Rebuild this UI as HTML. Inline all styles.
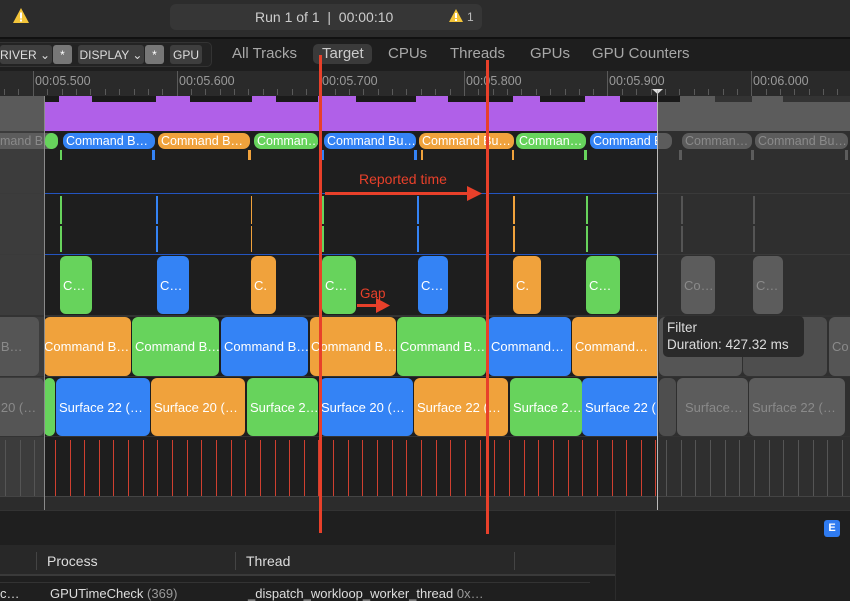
<!DOCTYPE html>
<html><head><meta charset="utf-8"><style>
*{margin:0;padding:0;box-sizing:border-box}
body{width:850px;height:600px;overflow:hidden;background:#1e1e1e;font-family:"Liberation Sans",sans-serif;position:relative;color:#ddd}
.a{position:absolute}
.p{position:absolute;border-radius:6px;color:#fff;font-size:13px;white-space:nowrap;overflow:hidden;display:flex;align-items:center;padding-left:3px}
.s{border-radius:7px;height:16px;font-size:12.5px;padding-left:3px}
.g{background:#67d35c}.b{background:#3483f5}.o{background:#f0a23c}.x{background:#5c5c5c;color:#8a8a8a}
.tk{position:absolute;width:2px}
.btn{position:absolute;top:45px;height:19px;background:#3e3e3e;color:#ddd;font-size:12px;display:flex;align-items:center;justify-content:center;border-radius:3px}
.tab{position:absolute;top:45px;font-size:15px;color:#a8a8a8}
.rl{position:absolute;top:74px;font-size:12.5px;color:#9a9a9a}
</style></head><body>
<div class="a" style="left:0;top:0;width:850px;height:37px;background:#2c2c2c"></div>
<div class="a" style="left:0;top:37px;width:850px;height:2px;background:#111"></div>
<svg class="a" style="left:12px;top:7px" width="18" height="17"><path d="M9 1L17 16H1Z" fill="#f3c53a"/><rect x="8" y="5.5" width="2" height="6" fill="#fff"/><rect x="8" y="12.5" width="2" height="2" fill="#fff"/></svg>
<div class="a" style="left:170px;top:4px;width:312px;height:26px;background:#363636;border-radius:6px"></div>
<div class="a" style="left:255px;top:9px;font-size:14px;color:#ccc">Run 1 of 1 &nbsp;|&nbsp; 00:00:10</div>
<svg class="a" style="left:448px;top:8px" width="16" height="15"><path d="M8 1L15 14H1Z" fill="#f3c53a"/><rect x="7" y="5" width="2" height="5" fill="#fff"/><rect x="7" y="11" width="2" height="2" fill="#fff"/></svg>
<div class="a" style="left:467px;top:10px;font-size:12px;color:#bbb">1</div>
<div class="a" style="left:0;top:39px;width:850px;height:32px;background:#1e1e1e"></div>
<div class="a" style="left:-5px;top:42px;width:217px;height:25px;border:1px solid #333;border-radius:5px;background:#232323"></div>
<div class="btn" style="left:0;width:52px;justify-content:flex-start">RIVER ⌄</div>
<div class="btn" style="left:53px;width:19px;background:#777;color:#fff">*</div>
<div class="btn" style="left:78px;width:66px">DISPLAY ⌄</div>
<div class="btn" style="left:145px;width:19px;background:#777;color:#fff">*</div>
<div class="btn" style="left:170px;width:32px">GPU</div>
<div class="tab" style="left:232px">All Tracks</div>
<div class="a" style="left:313px;top:44px;width:59px;height:20px;background:#3a3a3a;border-radius:5px"></div>
<div class="tab" style="left:322px;color:#ccc">Target</div>
<div class="tab" style="left:388px">CPUs</div>
<div class="tab" style="left:450px">Threads</div>
<div class="tab" style="left:530px">GPUs</div>
<div class="tab" style="left:592px">GPU Counters</div>
<div class="a" style="left:0;top:71px;width:850px;height:25px;background:#2a2a2a"></div>
<svg class="a" style="left:0;top:71px" width="850" height="25" shape-rendering="crispEdges"><path stroke="#5a5a5a" stroke-width="1" d="M4.5 18v6M18.5 18v6M47.5 18v6M62.5 18v6M76.5 18v6M90.5 18v6M105.5 18v6M119.5 18v6M134.5 18v6M148.5 18v6M162.5 18v6M191.5 18v6M205.5 18v6M220.5 18v6M234.5 18v6M248.5 18v6M263.5 18v6M277.5 18v6M292.5 18v6M306.5 18v6M335.5 18v6M349.5 18v6M363.5 18v6M378.5 18v6M392.5 18v6M406.5 18v6M421.5 18v6M435.5 18v6M450.5 18v6M478.5 18v6M493.5 18v6M507.5 18v6M521.5 18v6M536.5 18v6M550.5 18v6M565.5 18v6M579.5 18v6M593.5 18v6M622.5 18v6M636.5 18v6M651.5 18v6M665.5 18v6M679.5 18v6M694.5 18v6M708.5 18v6M723.5 18v6M737.5 18v6M766.5 18v6M780.5 18v6M794.5 18v6M809.5 18v6M823.5 18v6M837.5 18v6M33.5 0v25M177.5 0v25M320.5 0v25M464.5 0v25M607.5 0v25M751.5 0v25"/></svg>
<div class="rl" style="left:35px">00:05.500</div>
<div class="rl" style="left:179px">00:05.600</div>
<div class="rl" style="left:322px">00:05.700</div>
<div class="rl" style="left:466px">00:05.800</div>
<div class="rl" style="left:609px">00:05.900</div>
<div class="rl" style="left:753px">00:06.000</div>
<div class="a" style="left:652px;top:89px;width:11px;height:5px;background:#ddd;clip-path:polygon(0 0,100% 0,50% 100%)"></div>
<div class="a" style="left:0;top:96px;width:44px;height:414px;background:#3c3c3c"></div>
<div class="a" style="left:657px;top:96px;width:193px;height:414px;background:#2f2f2f"></div>
<div class="a" style="left:0;top:96px;width:44px;height:35px;background:#5a5a5a"></div>
<div class="a" style="left:657px;top:96px;width:193px;height:35px;background:#5c5c5c"></div>
<div class="a" style="left:44px;top:96px;width:613px;height:35px;background:#b060e8"></div>
<div class="a" style="left:44px;top:96px;width:806px;height:6px;background:linear-gradient(90deg,#1a1a1a 0 15px,transparent 15px 48px,#1a1a1a 48px 112px,transparent 112px 146px,#1a1a1a 146px 208px,transparent 208px 232px,#1a1a1a 232px 274px,transparent 274px 312px,#1a1a1a 312px 372px,transparent 372px 404px,#1a1a1a 404px 469px,transparent 469px 496px,#1a1a1a 496px 541px,transparent 541px 576px,#1a1a1a 576px 636px,transparent 636px 671px,#333 671px 708px,transparent 708px 739px,#333 739px 804px)"></div>
<div class="a" style="left:0;top:193px;width:850px;height:1px;background:#3a3a3a"></div>
<div class="a" style="left:44px;top:193px;width:613px;height:1px;background:#2455c0"></div>
<div class="a" style="left:0;top:254px;width:850px;height:1px;background:#3a3a3a"></div>
<div class="a" style="left:44px;top:254px;width:613px;height:1px;background:#2455c0"></div>
<div class="a" style="left:0;top:315px;width:850px;height:2px;background:#333"></div>
<div class="a" style="left:0;top:376px;width:850px;height:1px;background:#333"></div>
<div class="a" style="left:0;top:436px;width:850px;height:1px;background:#333"></div>
<div class="p s x" style="left:-20px;top:133px;width:78px;padding-left:20px">mand Bu…</div>
<div class="p s g" style="left:45px;top:133px;width:13px"></div>
<div class="p s b" style="left:63px;top:133px;width:92px">Command B…</div>
<div class="p s o" style="left:158px;top:133px;width:92px">Command B…</div>
<div class="p s g" style="left:254px;top:133px;width:64px">Comman…</div>
<div class="p s b" style="left:324px;top:133px;width:92px">Command Bu…</div>
<div class="p s o" style="left:419px;top:133px;width:95px">Command Bu…</div>
<div class="p s g" style="left:516px;top:133px;width:70px">Comman…</div>
<div class="p s b" style="left:590px;top:133px;width:67px;border-radius:7px 0 0 7px">Command B</div>
<div class="p s x" style="left:657px;top:133px;width:15px;border-radius:0 7px 7px 0"></div>
<div class="p s x" style="left:682px;top:133px;width:70px">Comman…</div>
<div class="p s x" style="left:755px;top:133px;width:93px">Command Bu…</div>
<div class="tk" style="left:60px;top:150px;height:10px;background:#67d35c"></div>
<div class="tk" style="left:152px;top:150px;height:10px;background:#3483f5;width:3px"></div>
<div class="tk" style="left:248px;top:150px;height:10px;background:#f0a23c;width:3px"></div>
<div class="tk" style="left:322px;top:150px;height:10px;background:#3483f5"></div>
<div class="tk" style="left:414px;top:150px;height:10px;background:#3483f5;width:3px"></div>
<div class="tk" style="left:421px;top:150px;height:10px;background:#f0a23c"></div>
<div class="tk" style="left:512px;top:150px;height:10px;background:#f0a23c"></div>
<div class="tk" style="left:584px;top:150px;height:10px;background:#67d35c;width:3px"></div>
<div class="tk" style="left:679px;top:150px;height:10px;background:#5c5c5c;width:3px"></div>
<div class="tk" style="left:751px;top:150px;height:10px;background:#5c5c5c;width:3px"></div>
<div class="tk" style="left:845px;top:150px;height:10px;background:#5c5c5c;width:3px"></div>
<div class="tk" style="left:60px;top:196px;height:56px;background:linear-gradient(#67d35c 0 28px,transparent 28px 30px,#67d35c 30px)"></div>
<div class="tk" style="left:156px;top:196px;height:56px;background:linear-gradient(#3483f5 0 28px,transparent 28px 30px,#3483f5 30px)"></div>
<div class="tk" style="left:251px;top:196px;height:56px;width:1px;background:linear-gradient(#f0a23c 0 28px,transparent 28px 30px,#f0a23c 30px)"></div>
<div class="tk" style="left:322px;top:196px;height:56px;background:linear-gradient(#67d35c 0 28px,transparent 28px 30px,#67d35c 30px)"></div>
<div class="tk" style="left:417px;top:196px;height:56px;background:linear-gradient(#3483f5 0 28px,transparent 28px 30px,#3483f5 30px)"></div>
<div class="tk" style="left:513px;top:196px;height:56px;background:linear-gradient(#f0a23c 0 28px,transparent 28px 30px,#f0a23c 30px)"></div>
<div class="tk" style="left:586px;top:196px;height:56px;background:linear-gradient(#67d35c 0 28px,transparent 28px 30px,#67d35c 30px)"></div>
<div class="tk" style="left:681px;top:196px;height:56px;background:linear-gradient(#555 0 28px,transparent 28px 30px,#555 30px)"></div>
<div class="tk" style="left:753px;top:196px;height:56px;background:linear-gradient(#555 0 28px,transparent 28px 30px,#555 30px)"></div>
<div class="p g" style="left:60px;top:256px;width:32px;height:58px">C…</div>
<div class="p b" style="left:157px;top:256px;width:32px;height:58px">C…</div>
<div class="p o" style="left:251px;top:256px;width:25px;height:58px">C.</div>
<div class="p g" style="left:322px;top:256px;width:34px;height:58px">C…</div>
<div class="p b" style="left:418px;top:256px;width:30px;height:58px">C…</div>
<div class="p o" style="left:513px;top:256px;width:28px;height:58px">C.</div>
<div class="p g" style="left:586px;top:256px;width:34px;height:58px">C…</div>
<div class="p x" style="left:681px;top:256px;width:34px;height:58px">Co…</div>
<div class="p x" style="left:753px;top:256px;width:30px;height:58px">C…</div>
<div class="p x" style="left:-10px;top:317px;width:49px;height:59px;padding-left:0;background:#555">d B…</div>
<div class="p o" style="left:44px;top:317px;width:87px;height:59px;padding-left:0">Command B…</div>
<div class="p g" style="left:132px;top:317px;width:87px;height:59px">Command B…</div>
<div class="p b" style="left:221px;top:317px;width:87px;height:59px">Command B…</div>
<div class="p o" style="left:310px;top:317px;width:86px;height:59px;padding-left:1px">Command B…</div>
<div class="p g" style="left:397px;top:317px;width:89px;height:59px">Command B…</div>
<div class="p b" style="left:488px;top:317px;width:83px;height:59px">Command…</div>
<div class="p o" style="left:572px;top:317px;width:85px;height:59px;border-radius:6px 0 0 6px">Command…</div>
<div class="p x" style="left:659px;top:317px;width:83px;height:59px;background:#555"></div>
<div class="p x" style="left:743px;top:317px;width:84px;height:59px;background:#4e4e4e">…</div>
<div class="p x" style="left:829px;top:317px;width:30px;height:59px;background:#555">Co</div>
<div class="p x" style="left:-10px;top:378px;width:54px;height:58px;background:#555;padding-left:0">e 20 (…</div>
<div class="p g" style="left:44px;top:378px;width:11px;height:58px"></div>
<div class="p b" style="left:56px;top:378px;width:94px;height:58px">Surface 22 (…</div>
<div class="p o" style="left:151px;top:378px;width:94px;height:58px">Surface 20 (…</div>
<div class="p g" style="left:247px;top:378px;width:71px;height:58px">Surface 2…</div>
<div class="p b" style="left:320px;top:378px;width:93px;height:58px;padding-left:1px">Surface 20 (…</div>
<div class="p o" style="left:414px;top:378px;width:94px;height:58px">Surface 22 (…</div>
<div class="p g" style="left:510px;top:378px;width:72px;height:58px">Surface 2…</div>
<div class="p b" style="left:582px;top:378px;width:75px;height:58px;border-radius:6px 0 0 6px">Surface 22 (…</div>
<div class="p x" style="left:659px;top:378px;width:17px;height:58px;background:#4e4e4e"></div>
<div class="p x" style="left:677px;top:378px;width:71px;height:58px;padding-left:8px">Surface…</div>
<div class="p x" style="left:749px;top:378px;width:96px;height:58px">Surface 22 (…</div>
<svg class="a" style="left:0;top:437px" width="850" height="59" shape-rendering="crispEdges">
<path stroke="#d04030" stroke-width="1" d="M55.5 3v56M70.5 3v56M84.5 3v56M99.5 3v56M113.5 3v56M128.5 3v56M143.5 3v56M157.5 3v56M172.5 3v56M187.5 3v56M201.5 3v56M216.5 3v56M231.5 3v56M245.5 3v56M260.5 3v56M275.5 3v56M289.5 3v56M304.5 3v56M318.5 3v56M333.5 3v56M348.5 3v56M362.5 3v56M377.5 3v56M392.5 3v56M406.5 3v56M421.5 3v56M436.5 3v56M450.5 3v56M465.5 3v56M480.5 3v56M494.5 3v56M509.5 3v56M524.5 3v56M538.5 3v56M553.5 3v56M568.5 3v56M582.5 3v56M597.5 3v56M612.5 3v56M626.5 3v56M641.5 3v56M655.5 3v56"/>
<path stroke="#555" stroke-width="1" d="M5.5 3v56M20.5 3v56M34.5 3v56M666.5 3v56M681.5 3v56M695.5 3v56M710.5 3v56M725.5 3v56M739.5 3v56M754.5 3v56M769.5 3v56M783.5 3v56M798.5 3v56M813.5 3v56M827.5 3v56M842.5 3v56"/>
</svg>
<div class="a" style="left:0;top:496px;width:850px;height:14px;background:#2c2c2c;border-top:1px solid #444"></div>
<div class="a" style="left:44px;top:96px;width:1px;height:414px;background:#8a8a8a"></div>
<div class="a" style="left:657px;top:90px;width:1px;height:420px;background:#bbb"></div>
<div class="a" style="left:663px;top:316px;width:141px;height:41px;background:#2a2a2a;border-radius:5px;padding:3px 0 0 4px;font-size:13.5px;color:#ddd;line-height:17px">Filter<br>Duration: 427.32 ms</div>
<div class="a" style="left:0;top:510px;width:850px;height:90px;background:#1f1f1f;border-top:1px solid #333"></div>
<div class="a" style="left:615px;top:511px;width:1px;height:89px;background:#2c2c2c"></div>
<div class="a" style="left:824px;top:520px;width:16px;height:17px;background:#2f7bf0;border-radius:3px;color:#fff;font-size:11px;font-weight:bold;text-align:center;line-height:17px">E</div>
<div class="a" style="left:0;top:545px;width:615px;height:31px;background:#282828;border-bottom:2px solid #3a3a3a"></div>
<div class="a" style="left:36px;top:552px;width:1px;height:18px;background:#444"></div>
<div class="a" style="left:235px;top:552px;width:1px;height:18px;background:#444"></div>
<div class="a" style="left:514px;top:552px;width:1px;height:18px;background:#444"></div>
<div class="a" style="left:47px;top:553px;font-size:14px;color:#ddd">Process</div>
<div class="a" style="left:246px;top:553px;font-size:14px;color:#ddd">Thread</div>
<div class="a" style="left:0;top:582px;width:590px;height:1px;background:#333"></div>
<div class="a" style="left:0;top:586px;font-size:13px;color:#ddd;white-space:nowrap">c…</div>
<div class="a" style="left:50px;top:586px;font-size:13px;color:#ddd;white-space:nowrap">GPUTimeCheck <span style="color:#999">(369)</span></div>
<div class="a" style="left:248px;top:586px;font-size:13px;color:#ddd;white-space:nowrap">_dispatch_workloop_worker_thread <span style="color:#999">0x…</span></div>
<div class="a" style="left:319px;top:55px;width:3px;height:478px;background:#e8402a"></div>
<div class="a" style="left:486px;top:60px;width:3px;height:474px;background:#e8402a"></div>
<div class="a" style="left:359px;top:171px;font-size:14px;color:#e8402a">Reported time</div>
<div class="a" style="left:325px;top:192px;width:145px;height:3px;background:#e8402a"></div>
<div class="a" style="left:467px;top:186px;width:15px;height:15px;background:#e8402a;clip-path:polygon(0 0,100% 50%,0 100%)"></div>
<div class="a" style="left:360px;top:286px;font-size:13.5px;color:#e8402a">Gap</div>
<div class="a" style="left:357px;top:304px;width:22px;height:3px;background:#e8402a"></div>
<div class="a" style="left:376px;top:298px;width:14px;height:15px;background:#e8402a;clip-path:polygon(0 0,100% 50%,0 100%)"></div>
</body></html>
